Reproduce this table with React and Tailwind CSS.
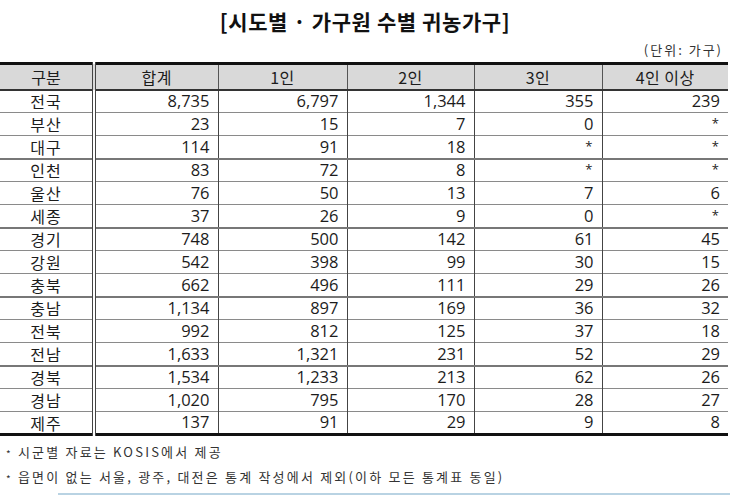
const rows = [
  ['전국', '8,735', '6,797', '1,344', '355', '239'],
  ['부산', '23', '15', '7', '0', '*'],
  ['대구', '114', '91', '18', '*', '*'],
  ['인천', '83', '72', '8', '*', '*'],
  ['울산', '76', '50', '13', '7', '6'],
  ['세종', '37', '26', '9', '0', '*'],
  ['경기', '748', '500', '142', '61', '45'],
  ['강원', '542', '398', '99', '30', '15'],
  ['충북', '662', '496', '111', '29', '26'],
  ['충남', '1,134', '897', '169', '36', '32'],
  ['전북', '992', '812', '125', '37', '18'],
  ['전남', '1,633', '1,321', '231', '52', '29'],
  ['경북', '1,534', '1,233', '213', '62', '26'],
  ['경남', '1,020', '795', '170', '28', '27'],
  ['제주', '137', '91', '29', '9', '8'],
];

const headers = ['합계', '1인', '2인', '3인', '4인 이상'];
const widths = ['w-[124px]', 'w-[129px]', 'w-[127px]', 'w-[128px]', 'w-[126px]'];

const notes = [
  '시군별 자료는 KOSIS에서 제공',
  '읍면이 없는 서울, 광주, 대전은 통계 작성에서 제외(이하 모든 통계표 동일)',
];

const kr = { fontFamily: '"Noto Sans CJK KR", sans-serif' };

function Cell({ value }) {
  // asterisks are smaller and sit a bit high
  if (value === '*') {
    return <span className="text-[13px] align-[2px] pr-[1px]">*</span>;
  }
  return value;
}

export default function App() {
  return (
    <div
      className="w-[730px] h-[497px] bg-white text-[#1c1c1c] flex flex-col"
      style={{ fontFamily: '"Open Sans", "Noto Sans CJK KR", sans-serif' }}
    >
      <div className="pt-[6px] h-[40px] text-center text-[21px] font-bold tracking-[0.6px] text-[#111]" style={kr}>
        [시도별 · 가구원 수별 귀농가구]
      </div>
      <div className="h-[22px] pr-[7px] text-right text-[13px] text-[#333] tracking-[2px]" style={kr}>
        (단위: 가구)
      </div>

      <table className="border-collapse w-[728px] table-fixed">
        <thead>
          <tr className="h-[26px] bg-[#d9d9d9] border-t-[3px] border-t-[#111] border-b-2 border-b-[#333]">
            <th className="w-[94px] p-0 font-normal text-[16px] border-r-[4px] border-double border-r-[#444] leading-none" style={kr}>
              구분
            </th>
            {headers.map((h, i) => (
              <th key={h}
                className={`${widths[i]} p-0 font-normal text-[16px] leading-none tracking-[0.5px] ${i < 4 ? 'border-r border-r-[#555]' : ''}`}
                style={kr}>
                {h}
              </th>
            ))}
          </tr>
        </thead>
        <tbody>
          {rows.map((r, ri) => (
            <tr key={r[0]}
              className={`h-[23px] ${ri === rows.length - 1 ? 'border-b-[3px] border-b-[#111]' : (ri % 3 === 2 ? 'border-b-2 border-b-[#777]' : 'border-b border-b-[#8a8a8a]')}`}>
              <td className="p-0 text-center text-[16px] leading-none border-r-[4px] border-double border-r-[#444] tracking-[1px]" style={kr}>
                {r[0]}
              </td>
              {r.slice(1).map((v, ci) => (
                <td key={ci}
                  className={`p-0 pr-[8px] text-right text-[16.5px] leading-none ${ci < 4 ? 'border-r border-r-[#444]' : ''}`}>
                  <Cell value={v} />
                </td>
              ))}
            </tr>
          ))}
        </tbody>
      </table>

      <div className="pt-[3px] pl-[6px] flex flex-col text-[13px] text-[#333] tracking-[2.2px]" style={kr}>
        {notes.map((n) => (
          <div key={n} className="h-[25px] flex items-center gap-[5px]">
            <span className="text-[10px] leading-none pt-[5px]">*</span>
            <span>{n}</span>
          </div>
        ))}
      </div>

      <div className="mt-auto mb-[2px] ml-[58px] h-[2px] bg-[#b9d3e3]" />
    </div>
  );
}
